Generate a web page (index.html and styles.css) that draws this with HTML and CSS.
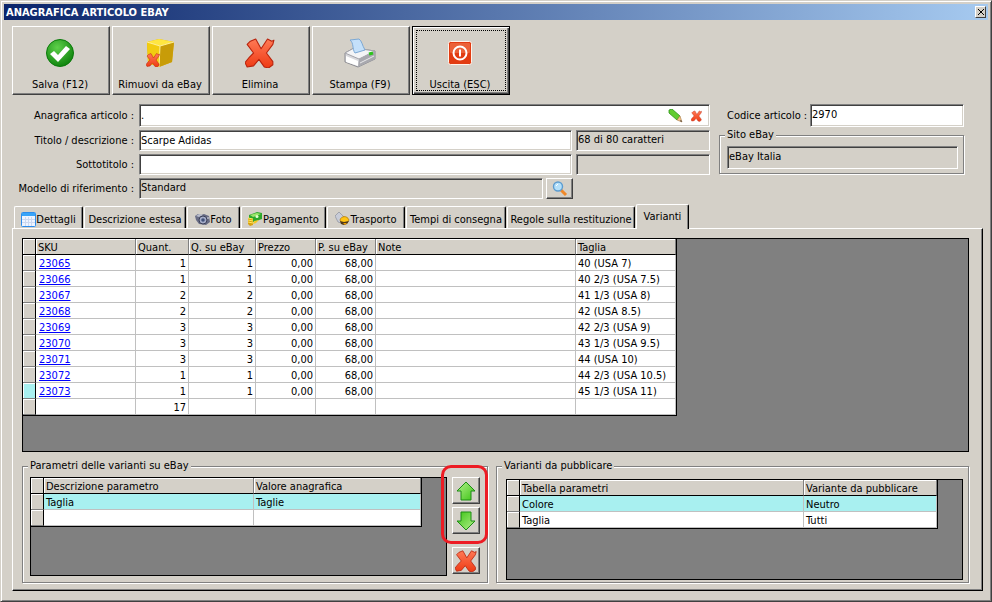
FILE: index.html
```html
<!DOCTYPE html>
<html lang="it">
  <head>
    <meta charset="UTF-8" />
    <meta name="viewport" content="width=device-width, initial-scale=1.0" />
    <title>Anagrafica articolo eBay</title>
    <link rel="stylesheet" href="styles.css">
  </head>
  <body>
    <!-- shared icons -->
    <svg class="defs" width="0" height="0">
      <defs>
        <linearGradient id="red" x1="0" y1="0" x2="0" y2="1">
          <stop offset="0" stop-color="#ff7a56" />
          <stop offset="1" stop-color="#ee3a14" />
        </linearGradient>
        <linearGradient id="green" x1="0" y1="0" x2="1" y2="1">
          <stop offset="0" stop-color="#b4f08c" />
          <stop offset="1" stop-color="#3cc414" />
        </linearGradient>
        <radialGradient id="ball" cx="0.4" cy="0.3" r="0.8">
          <stop offset="0" stop-color="#5ed04a" />
          <stop offset="1" stop-color="#067a06" />
        </radialGradient>
      </defs>
      <symbol id="cross" viewBox="0 0 28 28">
        <path d="M5 3l5-2 5 9 6-9 4 2 2-1-1 4-6 8 6 8v3l-4 3-4-1-5-7-5 6-6 1-2-4 4-5 4-4-6-8z" fill="url(#red)" stroke="#b8220c" stroke-width="1" stroke-linejoin="round" />
      </symbol>
      <symbol id="arrow" viewBox="0 0 20 20">
        <path d="M10 1l9 9h-4v9H5v-9H1z" fill="url(#green)" stroke="#1c8c14" stroke-linejoin="round" />
      </symbol>
    </svg>

    <div class="window">
      <header class="titlebar">
        <h1>ANAGRAFICA ARTICOLO EBAY</h1>
        <button type="button" class="close" aria-label="Chiudi">
          <svg width="6" height="6" viewBox="0 0 6 6"><path d="M0 0l6 6M6 0L0 6" stroke="#000" /></svg>
        </button>
      </header>

      <div class="toolbar">
        <button type="button" class="tool">
          <svg width="30" height="30" viewBox="0 0 30 30">
            <circle cx="15" cy="15" r="13.5" fill="url(#ball)" stroke="#0a7a0a" />
            <path d="M5 16l4-3 4 4 8-9 4 3-12 13z" fill="#fff" />
          </svg>
          <span>Salva (F12)</span>
        </button>
        <button type="button" class="tool">
          <svg width="30" height="30" viewBox="0 0 30 30">
            <path d="M2 4l12-3 15 3-2 20-13 5-11-4z" fill="#e0b000" />
            <path d="M2 4l12-3 15 3-14 4z" fill="#ffe640" />
            <path d="M15 8l14-4-2 20-13 5z" fill="#c89c08" />
            <path d="M2 4l13 4-1 21-11-4z" fill="#f2cc10" />
            <path d="M2 4l13 4 14-4M15 8l-1 21" fill="none" stroke="#fff09a" />
            <use href="#cross" x="1" y="15" width="14" height="14" />
          </svg>
          <span>Rimuovi da eBay</span>
        </button>
        <button type="button" class="tool">
          <svg width="30" height="30"><use href="#cross" width="30" height="30" /></svg>
          <span>Elimina</span>
        </button>
        <button type="button" class="tool">
          <svg width="32" height="30" viewBox="0 0 32 30">
            <path d="M1 15l9-5 21 3v8l-17 8-13-5z" fill="#d8d8dc" stroke="#8c8c92" />
            <path d="M1 15l9-5 21 3-16 8z" fill="#f4f4f6" stroke="#a4a4aa" />
            <path d="M2 18l12 5v5L2 24z" fill="#fff" />
            <path d="M15 21l16-8v8l-17 8z" fill="#a8a8ae" />
            <path d="M16 25l14-7" stroke="#e8e8ea" />
            <path d="M6 2L15 1c3 2 3 6 6 11l-10 3C8 11 10 5 6 2z" fill="#c4e0fa" stroke="#7ca8d4" />
            <path d="M25 16l4-1" stroke="#2cc41c" stroke-width="3" />
          </svg>
          <span>Stampa (F9)</span>
        </button>
        <button type="button" class="tool focused">
          <svg width="24" height="30" viewBox="0 0 24 30">
            <rect x="0.5" y="3.500" width="23" height="23" rx="2" fill="#e23c12" stroke="#fff2ea" />
            <rect x="2" y="5" width="20" height="10" rx="1" fill="#f07048" opacity="0.7" />
            <circle cx="12" cy="15" r="6.500" fill="none" stroke="#fff" stroke-width="2" />
            <path d="M12 11.500v7" stroke="#fff" stroke-width="2" />
          </svg>
          <span>Uscita (ESC)</span>
        </button>
      </div>

      <form class="form">
        <div class="main-fields">
          <label for="anagrafica">Anagrafica articolo :</label>
          <div class="row tall">
            <div class="picker">
              <input type="text" id="anagrafica" class="field" value="." />
              <div class="picker-icons">
                <button type="button" aria-label="Modifica">
                  <svg width="15" height="14" viewBox="0 0 15 14">
                    <path d="M1 1l3-1 8 7-3 4-8-7z" fill="#62cc30" stroke="#2c9418" stroke-width="0.8" />
                    <path d="M12 7l2 6-5-2z" fill="#f4c48c" stroke="#a87844" stroke-width="0.6" />
                    <path d="M13 11l1 2-2-1z" fill="#333" />
                  </svg>
                </button>
                <button type="button" aria-label="Cancella">
                  <svg width="11" height="12"><use href="#cross" width="11" height="12" /></svg>
                </button>
              </div>
            </div>
          </div>

          <label for="titolo">Titolo / descrizione :</label>
          <div class="row">
            <input type="text" id="titolo" class="field" value="Scarpe Adidas" />
            <input type="text" class="field readonly counter" value="68 di 80 caratteri" aria-label="Caratteri titolo" readonly />
          </div>

          <label for="sottotitolo">Sottotitolo :</label>
          <div class="row">
            <input type="text" id="sottotitolo" class="field" />
            <input type="text" class="field readonly counter" aria-label="Caratteri sottotitolo" readonly />
          </div>

          <label for="modello">Modello di riferimento :</label>
          <div class="row model">
            <input type="text" id="modello" class="field readonly" value="Standard" readonly />
            <button type="button" class="search" aria-label="Cerca">
              <svg width="16" height="16" viewBox="0 0 16 16">
                <path d="M9 9l5 5" stroke="#f08828" stroke-width="3" />
                <circle cx="6" cy="5.500" r="4.500" fill="#b4e0fa" stroke="#5c9cd0" stroke-width="1.400" />
                <path d="M4 5l2-2" stroke="#fff" />
              </svg>
            </button>
          </div>
        </div>

        <div class="side-fields">
          <div class="code">
            <label for="codice">Codice articolo :</label>
            <input type="text" id="codice" class="field" value="2970" />
          </div>
          <fieldset class="site">
            <legend>Sito eBay</legend>
            <input type="text" class="field readonly" value="eBay Italia" aria-label="Sito eBay" readonly />
          </fieldset>
        </div>
      </form>

      <div class="tabs" role="tablist">
        <button type="button" role="tab" class="tab dettagli">
          <svg width="15" height="15" viewBox="0 0 15 15">
            <rect x="0.5" y="0.5" width="14" height="14" rx="1" fill="#eef4ff" stroke="#2c8cec" />
            <path d="M1 2.500h13" stroke="#38a4f8" stroke-width="3" />
            <path d="M4.500 5v9M7.500 5v9M10.500 5v9M1 7.500h13M1 10.500h13" stroke="#ccd8f0" />
          </svg>
          <span>Dettagli</span>
        </button>
        <button type="button" role="tab" class="tab descrizione"><span>Descrizione estesa</span></button>
        <button type="button" role="tab" class="tab foto">
          <svg width="15" height="13" viewBox="0 0 15 13">
            <path d="M0 3l3-2 3 1 3-1 5 2 1 6-4 3-7-1-3-4z" fill="#686c84" />
            <path d="M1 3l3-2 4 1-4 2z" fill="#b8bccc" />
            <circle cx="8" cy="7" r="4" fill="#a4acc8" stroke="#3c4058" />
            <circle cx="8" cy="7" r="1.800" fill="#405078" />
            <path d="M12 5h2" stroke="#e0e0e8" />
          </svg>
          <span>Foto</span>
        </button>
        <button type="button" role="tab" class="tab pagamento">
          <svg width="15" height="14" viewBox="0 0 15 14">
            <path d="M1 3l8-3 5 1v6l-9 3-4-2z" fill="#2ca82c" />
            <path d="M2 3l7-2 4 1-8 3z" fill="#9ce46c" />
            <circle cx="9" cy="4.500" r="1.500" fill="#e4ffd0" />
            <path d="M0 6l5 1v6l-3 1-2-2z" fill="#d8a010" />
            <path d="M0 6l5 1M0 8l5 1M0 10l5 1" stroke="#ffe860" />
            <path d="M6 9l5-1-3 3-3 1z" fill="#f4c828" />
          </svg>
          <span>Pagamento</span>
        </button>
        <button type="button" role="tab" class="tab trasporto">
          <svg width="15" height="14" viewBox="0 0 15 14">
            <path d="M0 4l4-4 5 5-3 6-3-1z" fill="#c8ccd8" stroke="#8c909c" stroke-width="0.700" />
            <path d="M5 8c1-4 7-5 9 0l-2 3-5 1z" fill="#ffc414" stroke="#a87000" stroke-width="0.700" />
            <path d="M5 9l4 1 5-1-2 3-3 1-3-1z" fill="#503818" />
            <path d="M8 11l2 2 2-2z" fill="#f0a000" />
          </svg>
          <span>Trasporto</span>
        </button>
        <button type="button" role="tab" class="tab tempi"><span>Tempi di consegna</span></button>
        <button type="button" role="tab" class="tab regole"><span>Regole sulla restituzione</span></button>
        <button type="button" role="tab" class="tab varianti active" aria-selected="true"><span>Varianti</span></button>
      </div>

      <main class="panel">
        <div class="grid-area variants">
          <table class="grid">
            <colgroup>
              <col class="w-row" /><col class="w-sku" /><col class="w-quant" /><col class="w-qebay" />
              <col class="w-price" /><col class="w-price" /><col class="w-note" /><col class="w-size" />
            </colgroup>
            <thead>
              <tr><th></th><th>SKU</th><th>Quant.</th><th>Q. su eBay</th><th>Prezzo</th><th>P. su eBay</th><th>Note</th><th>Taglia</th></tr>
            </thead>
            <tbody>
              <tr><th></th><td><a href="#">23065</a></td><td class="num">1</td><td class="num">1</td><td class="num">0,00</td><td class="num">68,00</td><td></td><td>40 (USA 7)</td></tr>
              <tr><th></th><td><a href="#">23066</a></td><td class="num">1</td><td class="num">1</td><td class="num">0,00</td><td class="num">68,00</td><td></td><td>40 2/3 (USA 7.5)</td></tr>
              <tr><th></th><td><a href="#">23067</a></td><td class="num">2</td><td class="num">2</td><td class="num">0,00</td><td class="num">68,00</td><td></td><td>41 1/3 (USA 8)</td></tr>
              <tr><th></th><td><a href="#">23068</a></td><td class="num">2</td><td class="num">2</td><td class="num">0,00</td><td class="num">68,00</td><td></td><td>42 (USA 8.5)</td></tr>
              <tr><th></th><td><a href="#">23069</a></td><td class="num">3</td><td class="num">3</td><td class="num">0,00</td><td class="num">68,00</td><td></td><td>42 2/3 (USA 9)</td></tr>
              <tr><th></th><td><a href="#">23070</a></td><td class="num">3</td><td class="num">3</td><td class="num">0,00</td><td class="num">68,00</td><td></td><td>43 1/3 (USA 9.5)</td></tr>
              <tr><th></th><td><a href="#">23071</a></td><td class="num">3</td><td class="num">3</td><td class="num">0,00</td><td class="num">68,00</td><td></td><td>44 (USA 10)</td></tr>
              <tr><th></th><td><a href="#">23072</a></td><td class="num">1</td><td class="num">1</td><td class="num">0,00</td><td class="num">68,00</td><td></td><td>44 2/3 (USA 10.5)</td></tr>
              <tr><th class="current"></th><td><a href="#">23073</a></td><td class="num">1</td><td class="num">1</td><td class="num">0,00</td><td class="num">68,00</td><td></td><td>45 1/3 (USA 11)</td></tr>
              <tr><th></th><td></td><td class="num">17</td><td></td><td></td><td></td><td></td><td></td></tr>
            </tbody>
          </table>
        </div>

        <div class="groups">
          <fieldset class="group params">
            <legend>Parametri delle varianti su eBay</legend>
            <div class="grid-area">
              <table class="grid">
                <colgroup><col class="w-row" /><col class="w-param" /><col class="w-value" /></colgroup>
                <thead>
                  <tr><th></th><th>Descrizione parametro</th><th>Valore anagrafica</th></tr>
                </thead>
                <tbody>
                  <tr class="selected"><th></th><td>Taglia</td><td>Taglie</td></tr>
                  <tr><th></th><td></td><td></td></tr>
                </tbody>
              </table>
            </div>
            <div class="side-buttons">
              <div class="move">
                <button type="button" aria-label="Sposta su"><svg width="20" height="20"><use href="#arrow" width="20" height="20" /></svg></button>
                <button type="button" aria-label="Sposta giù"><svg class="down" width="20" height="20"><use href="#arrow" width="20" height="20" /></svg></button>
              </div>
              <button type="button" aria-label="Elimina parametro"><svg width="22" height="22"><use href="#cross" width="22" height="22" /></svg></button>
            </div>
          </fieldset>

          <fieldset class="group publish">
            <legend>Varianti da pubblicare</legend>
            <div class="grid-area">
              <table class="grid">
                <colgroup><col class="w-row" /><col class="w-table" /><col class="w-variant" /></colgroup>
                <thead>
                  <tr><th></th><th>Tabella parametri</th><th>Variante da pubblicare</th></tr>
                </thead>
                <tbody>
                  <tr class="selected"><th></th><td>Colore</td><td>Neutro</td></tr>
                  <tr><th></th><td>Taglia</td><td>Tutti</td></tr>
                </tbody>
              </table>
            </div>
          </fieldset>
        </div>
      </main>
    </div>
  </body>
</html>
```
FILE: styles.css
```css
* {
  box-sizing: border-box;
}
body {
  margin: 0;
  background: #d4d0c8;
}
body,
button,
input {
  font-family: Tahoma, "DejaVu Sans Condensed", "DejaVu Sans", sans-serif;
  font-size: 11px;
  line-height: 15px;
  color: #000;
}
button {
  display: flex;
  align-items: center;
  justify-content: center;
  padding: 0;
  background: #d4d0c8;
  border: 0;
  white-space: nowrap;
}
svg {
  display: block;
  flex: none;
}
.defs {
  position: absolute;
}

/* window frame */
.window {
  display: flex;
  flex-direction: column;
  min-height: 100vh;
  padding: 2px 2px 10px;
  border: 1px solid #d4d0c8;
  border-right-color: #404040;
  border-bottom-color: #404040;
  box-shadow: inset 1px 1px 0 #fff, inset -1px -1px 0 #808080;
}
.titlebar {
  display: flex;
  align-items: center;
  justify-content: space-between;
  height: 16px;
  margin: 1px 1px 0;
  padding: 0 2px;
  background: linear-gradient(to right, #0a246a, #a6caf0);
}
.titlebar h1 {
  margin: 0;
  font-size: 11px;
  color: #fff;
}
.close {
  width: 11px;
  height: 12px;
  border: 1px solid #fff;
  border-right-color: #404040;
  border-bottom-color: #404040;
}

/* toolbar */
.toolbar {
  display: flex;
  gap: 2px;
  padding: 6px 9px 0;
}
.tool {
  flex-direction: column;
  gap: 9px;
  width: 98px;
  height: 69px;
  padding: 8px 2px 0 0;
}
.tool,
.search,
.side-buttons button {
  border: 1px solid #fff;
  border-right-color: #404040;
  border-bottom-color: #404040;
  box-shadow: inset -1px -1px 0 #808080;
}
.tool.focused {
  border: 1px solid #000;
  box-shadow: inset 1px 1px 0 #fff, inset -1px -1px 0 #404040, inset -2px -2px 0 #808080;
  outline: 1px dotted #000;
  outline-offset: -5px;
}

/* form */
.form {
  display: grid;
  grid-template-columns: 1fr 245px;
  gap: 9px;
  padding: 9px 25px 0 9px;
}
.main-fields {
  display: grid;
  grid-template-columns: 122px 1fr;
  gap: 3px 5px;
  align-items: center;
}
.main-fields label {
  text-align: right;
  white-space: nowrap;
}
.row {
  display: flex;
  gap: 4px;
  height: 21px;
}
.row.tall {
  height: 23px;
}
.field {
  flex: 1;
  width: 100%;
  min-width: 0;
  height: 100%;
  padding: 0 1px;
  border: 1px solid #808080;
  border-right-color: #fff;
  border-bottom-color: #fff;
  background: #fff;
  box-shadow: inset 1px 1px 0 #404040, inset -1px -1px 0 #d4d0c8;
}
.field.readonly {
  padding-bottom: 3px;
  background: #d4d0c8;
}
.counter {
  flex: 0 0 134px;
}
.picker {
  position: relative;
  flex: 1;
}
.picker-icons {
  position: absolute;
  top: 4px;
  right: 8px;
  bottom: 4px;
  display: flex;
  gap: 8px;
}
.picker-icons button {
  background: none;
}
.model {
  gap: 3px;
  margin-right: 137px;
}
.search {
  width: 27px;
}
.code {
  display: flex;
  align-items: center;
  gap: 5px;
  height: 23px;
  padding-left: 8px;
}
.code .field {
  padding-bottom: 3px;
}
.code label {
  width: 78px;
  white-space: nowrap;
}
fieldset {
  min-width: 0;
  margin: 0;
  border: 1px solid #808080;
  box-shadow: 1px 1px 0 #fff, inset 1px 1px 0 #fff;
}
legend {
  height: 14px;
  padding: 0 2px;
  line-height: 14px;
  background: #d4d0c8;
}
.site {
  height: 46px;
  margin-top: 1px;
  padding: 4px 5px 5px 7px;
}
.site legend {
  margin-left: -2px;
}
.site .field {
  display: block;
  height: 23px;
}

/* tabs */
.tabs {
  display: flex;
  align-items: flex-end;
  gap: 1px;
  height: 25px;
  margin-top: 4px;
  padding-left: 11px;
}
.tab {
  height: 22px;
  padding-top: 3px;
  border-top: 1px solid #fff;
  border-left: 1px solid #fff;
  border-right: 1px solid #000;
  border-radius: 2px 2px 0 0;
  box-shadow: inset -1px 0 0 #808080;
}
.dettagli {
  width: 69px;
}
.descrizione {
  width: 102px;
}
.foto {
  width: 53px;
}
.pagamento {
  width: 85px;
}
.trasporto {
  width: 78px;
}
.tempi {
  width: 100px;
}
.regole {
  width: 128px;
}
.tab.active {
  z-index: 1;
  width: 53px;
  height: 25px;
  margin-bottom: -1px;
  padding: 0 0 1px;
}

/* tab page */
.panel {
  flex: 1;
  display: flex;
  flex-direction: column;
  gap: 7px;
  margin: 0 6px 0 9px;
  padding: 9px 13px 7px 9px;
  border: 1px solid #fff;
  border-right-color: #000;
  border-bottom-color: #000;
  box-shadow: inset -1px -1px 0 #808080;
}
.grid-area {
  flex: 1;
  min-width: 0;
  overflow: hidden;
  background: #808080;
  border: 1px solid #000;
}
.variants {
  flex: 1 0 213px;
}
.grid {
  width: min-content;
  table-layout: fixed;
  border-collapse: separate;
  border-spacing: 0;
  border-right: 1px solid #000;
  border-bottom: 1px solid #000;
  background: #fff;
}
.grid th,
.grid td {
  height: 16px;
  padding: 2px 2px 0;
  overflow: hidden;
  border-right: 1px solid #c0c0c0;
  border-bottom: 1px solid #c0c0c0;
  font-weight: normal;
  text-align: left;
  line-height: 13px;
  white-space: nowrap;
}
.grid th {
  background: #d4d0c8;
  border-color: #808080;
  box-shadow: inset 1px 1px 0 #fff;
}
.grid thead th {
  border-bottom-color: #000;
}
.grid th:first-child {
  border-right-color: #000;
}
.grid .num {
  text-align: right;
}
.grid a {
  padding-left: 1px;
  color: #0000ff;
}
.grid .current,
.grid .selected td {
  background: #a8f0f0;
}
.w-row {
  width: 13px;
}
.w-sku {
  width: 100px;
}
.w-quant {
  width: 53px;
}
.w-qebay {
  width: 67px;
}
.w-price {
  width: 60px;
}
.w-note {
  width: 200px;
}
.w-size {
  width: 100px;
}
.w-param {
  width: 210px;
}
.w-value {
  width: 167px;
}
.w-table {
  width: 284px;
}
.w-variant {
  width: 133px;
}

/* bottom groups */
.groups {
  display: grid;
  grid-template-columns: 466fr 473fr;
  gap: 8px;
}
.group {
  display: flex;
  height: 124px;
}
.group legend {
  margin-left: -2px;
}
.params {
  gap: 5px;
  padding: 4px 7px 6px;
}
.publish {
  padding: 6px 5px 2px 9px;
}
.publish legend {
  margin-left: -4px;
}
.side-buttons {
  display: flex;
  flex-direction: column;
  gap: 13px;
  width: 28px;
}
.side-buttons button {
  width: 28px;
  height: 27px;
}
.move {
  position: relative;
  display: flex;
  flex-direction: column;
  gap: 3px;
}
/* red frame round the two arrows */
.move::after {
  content: "";
  position: absolute;
  inset: -12px -8px -10px -11px;
  border: 3px solid #ed1c24;
  border-radius: 10px;
  pointer-events: none;
}
.down {
  transform: rotate(180deg);
}
```
